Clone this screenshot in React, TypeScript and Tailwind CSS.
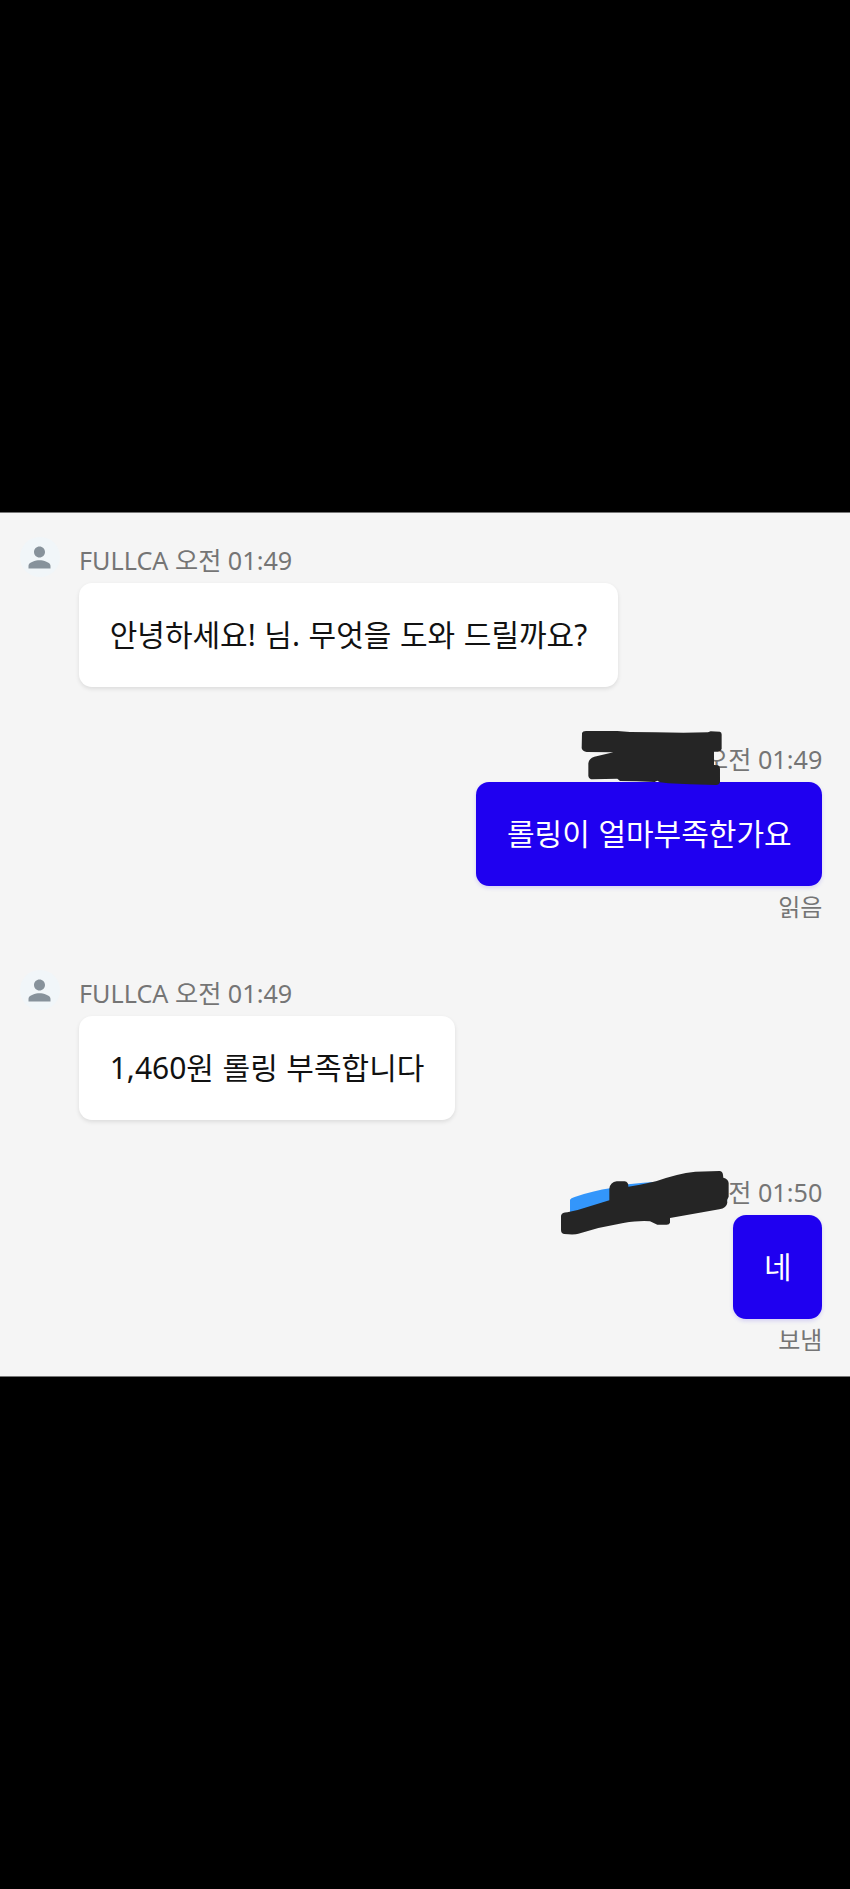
import React from "react";

const PersonIcon: React.FC = () => {
  return (
    <div className="flex w-10 h-10 items-center justify-center rounded-full bg-[#f1f6f9]">
      <svg className="w-[33px] h-[33px]" viewBox="0 0 24 24" fill="#87929b">
        <path d="M12 12c2.21 0 4-1.79 4-4s-1.79-4-4-4-4 1.79-4 4 1.79 4 4 4zm0 2c-2.67 0-8 1.34-8 4v2h16v-2c0-2.66-5.33-4-8-4z" />
      </svg>
    </div>
  );
};

const AgentMessage: React.FC<{ time: string; text: string }> = ({ time, text }) => {
  return (
    <div className="flex pl-[19.5px] gap-[19.5px] items-start">
      <PersonIcon />
      <div className="flex flex-col items-start">
        <p className="h-[45.5px] pt-[5px] text-[25.2px] leading-9 text-[#757575] whitespace-pre">FULLCA {time}</p>
        <div className="flex h-[104.5px] items-center px-[30.7px] pt-px rounded-[13px] bg-white shadow-[0_2px_4px_rgba(0,0,0,0.1)]">
          <p className="text-[30px] leading-10 [word-spacing:0.8px] text-[#111111] whitespace-pre">{text}</p>
        </div>
      </div>
    </div>
  );
};

interface UserMessageProps {
  time: string;
  text: string;
  status: string;
  children: React.ReactNode;
}

const UserMessage: React.FC<UserMessageProps> = ({ time, text, status, children }) => {
  return (
    <div className="relative flex flex-col items-end pr-[27.7px]">
      <p className="h-[39.5px] -mt-px mb-px text-[25.2px] leading-9 text-[#757575] whitespace-pre">{time}</p>
      <div className="flex h-[104.5px] items-center px-[30.7px] pt-px rounded-[13px] bg-[#1f00f0] shadow-[0_2px_4px_rgba(31,0,240,0.15)]">
        <p className="text-[30px] leading-10 [word-spacing:0.8px] text-white whitespace-pre">{text}</p>
      </div>
      <p className="h-10 pt-[3px] text-[24px] leading-9 text-[#757575]">{status}</p>
      {children}
    </div>
  );
};

const App: React.FC = () => {
  return (
    <div className="w-[850px] h-[1889px] bg-black pt-[512px] font-['Noto_Sans','Noto_Sans_CJK_KR',sans-serif]">
      <div className="h-[865px] border-y border-[#777777] bg-[#f5f5f5] pt-6 overflow-hidden">
        <div className="h-[205px]">
          <AgentMessage time="오전 01:49" text="안녕하세요! 님. 무엇을 도와 드릴까요?" />
        </div>
        <div className="h-[228px]">
          <UserMessage time="오전 01:49" text="롤링이 얼마부족한가요" status="읽음">
            <svg className="absolute -top-3 right-[126.5px] w-[143.33px] h-[56.67px]" viewBox="120 60 430 170" fill="#252525">
              <path d="M126 70Q128 63 138 63L232 63L270 66L345 67L430 68L504 67L512 64L540 65Q546 67 545 77L545 117Q543 124 534 125L522 125L522 165L534 166Q540 168 540 176L540 216Q538 225 528 225L450 223L385 220L360 217L352 212L344 216L290 214L240 213L232 206L158 208Q147 208 145 198L145 160Q147 145 163 140L220 127L140 126Q128 125 125 115Z" />
            </svg>
          </UserMessage>
        </div>
        <div className="h-[205px]">
          <AgentMessage time="오전 01:49" text="1,460원 롤링 부족합니다" />
        </div>
        <UserMessage time="오전 01:50" text="네" status="보냄">
          <svg className="absolute -top-[5px] right-[120px] w-[170px] h-[66.67px]" viewBox="60 60 510 200">
            <path fill="#3396fb" d="M90 190L90 149Q92 144 104 141Q165 121 210 115L250 104L310 98L350 95L320 150L130 190Z" />
            <path fill="#252525" d="M63 197Q66 187 82 187L113 180L208 151L208 116Q211 96 230 94L254 94Q266 96 265 110L300 104L348 94Q410 71 466 65L538 63Q548 64 549 74L550 83Q565 87 566 99L566 140Q559 150 562 158Q560 174 538 178L390 204L390 218Q388 224 380 224L352 224L330 214Q300 211 250 219L175 234L115 251Q105 255 72 252Q63 250 63 240Z" />
          </svg>
        </UserMessage>
      </div>
    </div>
  );
};

export default App;
